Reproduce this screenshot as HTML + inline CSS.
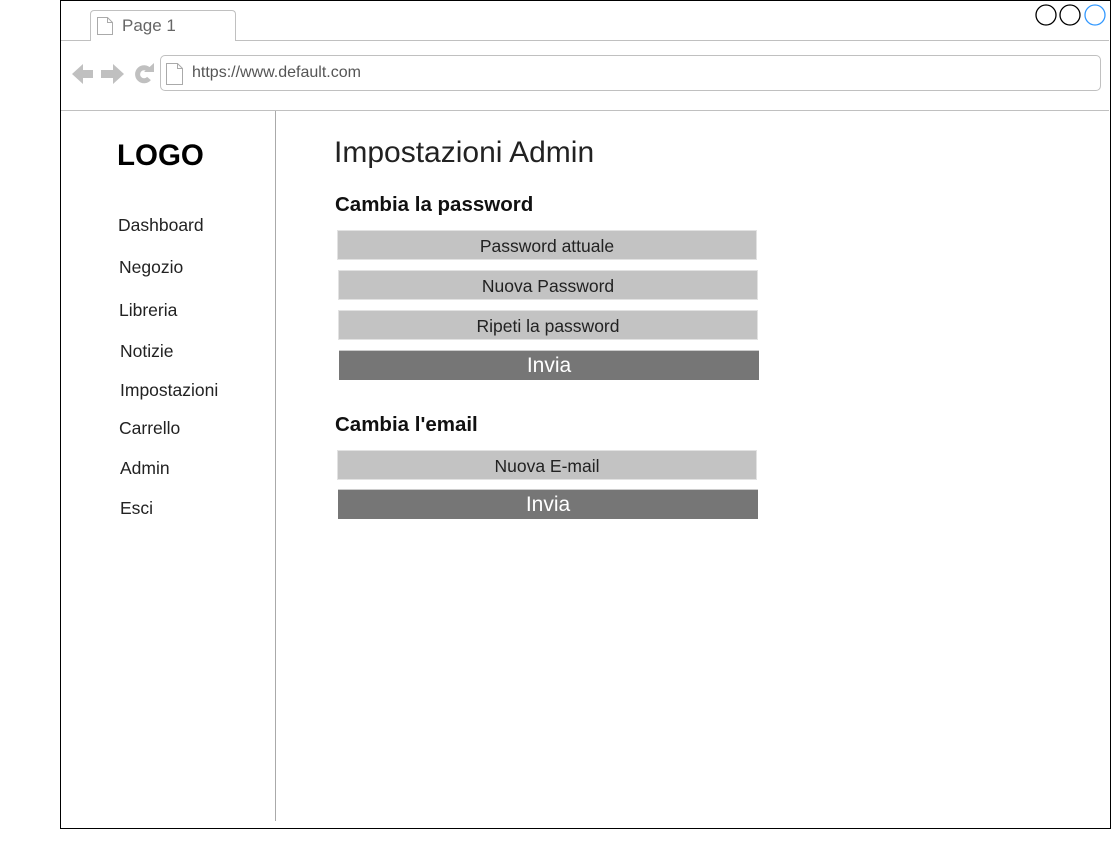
<!DOCTYPE html>
<html><head><style>
body{margin:0;width:1111px;height:865px;background:#fff;position:relative;font-family:"Liberation Sans",sans-serif;overflow:hidden}
.a{position:absolute}
.f{position:absolute;width:420px;height:30px;background:#c3c3c3;border:1px solid #e2e2e2;box-sizing:border-box;text-align:center;font-size:17.5px;line-height:30px;color:#222}
.b{position:absolute;width:420px;height:30px;background:#767676;border-top:1px solid #ccc;box-sizing:border-box;text-align:center;font-size:21px;line-height:30px;color:#fff}
.n{position:absolute;font-size:17.5px;color:#222}
</style></head><body>
<div class="a" style="left:60px;top:0;width:1051px;height:829px;border:1px solid #000;box-sizing:border-box"></div>
<div class="a" style="left:61px;top:40px;width:1048px;height:1px;background:#c0c0c0"></div>
<div class="a" style="left:90px;top:10px;width:146px;height:31px;border:1px solid #c0c0c0;border-bottom:none;border-radius:4px 4px 0 0;background:#fff;box-sizing:border-box"></div>
<svg class="a" style="left:96px;top:16px" width="18" height="20"><path d="M1.5 1.5h10l5 5v12h-15z M11.5 1.5v5h5" fill="none" stroke="#aaa"/></svg>
<div class="a" style="left:122px;top:16px;font-size:17px;color:#666">Page 1</div>
<svg class="a" style="left:1034px;top:3px" width="76" height="24"><circle cx="12" cy="12" r="10" fill="none" stroke="#000" stroke-width="1.3"/><circle cx="36" cy="12" r="10" fill="none" stroke="#000" stroke-width="1.3"/><circle cx="61" cy="12" r="10" fill="none" stroke="#3399ff" stroke-width="1.3"/></svg>
<svg class="a" style="left:70px;top:60px" width="90" height="28">
<path d="M2 14l11-10v6h10v8H13v6z" fill="#c0c0c0"/>
<path d="M54 14L43 4v6H31v8h12v6z" fill="#c0c0c0"/>
<path d="M79 10A6.5 6.5 0 1 0 79 18.5" fill="none" stroke="#c0c0c0" stroke-width="5"/>
<path d="M74 12h10V3z" fill="#c0c0c0"/>
</svg>
<div class="a" style="left:160px;top:55px;width:941px;height:36px;border:1px solid #c0c0c0;border-radius:5px;box-sizing:border-box"></div>
<svg class="a" style="left:165px;top:62px" width="20" height="24"><path d="M1.5 1.5h11l5 5v16h-16z M12.5 1.5v5h5" fill="none" stroke="#aaa"/></svg>
<div class="a" style="left:192px;top:64px;font-size:16px;color:#555">https://www.default.com</div>
<div class="a" style="left:61px;top:110px;width:1048px;height:1px;background:#c0c0c0"></div>
<div class="a" style="left:275px;top:111px;width:1px;height:710px;background:#aaa"></div>
<div class="a" style="left:117px;top:139px;font-size:29.5px;font-weight:bold;color:#000">LOGO</div>
<div class="n" style="left:118px;top:215px">Dashboard</div>
<div class="n" style="left:119px;top:257px">Negozio</div>
<div class="n" style="left:119px;top:300px">Libreria</div>
<div class="n" style="left:120px;top:341px">Notizie</div>
<div class="n" style="left:120px;top:380px">Impostazioni</div>
<div class="n" style="left:119px;top:418px">Carrello</div>
<div class="n" style="left:120px;top:458px">Admin</div>
<div class="n" style="left:120px;top:498px">Esci</div>
<div class="a" style="left:334px;top:136px;font-size:30px;color:#222">Impostazioni Admin</div>
<div class="a" style="left:335px;top:193px;font-size:20.5px;font-weight:bold;color:#111">Cambia la password</div>
<div class="f" style="left:337px;top:230px">Password attuale</div>
<div class="f" style="left:338px;top:270px">Nuova Password</div>
<div class="f" style="left:338px;top:310px">Ripeti la password</div>
<div class="b" style="left:339px;top:350px">Invia</div>
<div class="a" style="left:335px;top:413px;font-size:20.5px;font-weight:bold;color:#111">Cambia l'email</div>
<div class="f" style="left:337px;top:450px">Nuova E-mail</div>
<div class="b" style="left:338px;top:489px">Invia</div>
</body></html>
